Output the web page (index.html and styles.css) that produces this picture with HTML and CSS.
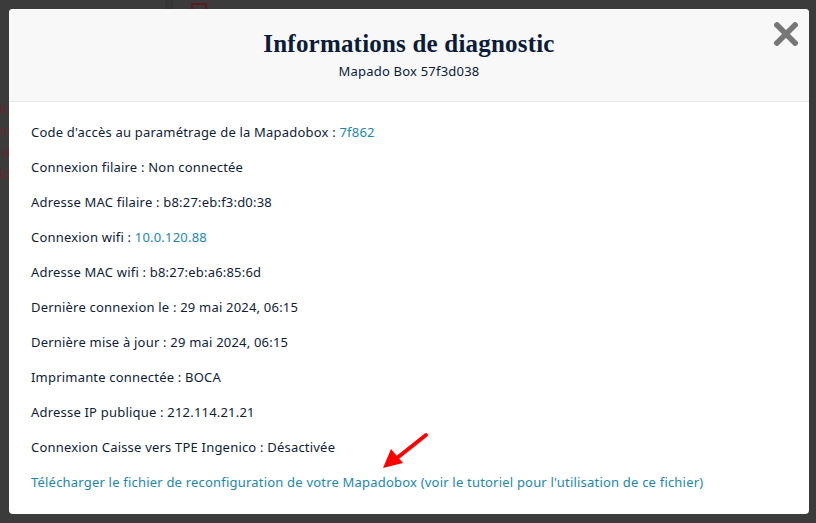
FILE: index.html
```html
<!DOCTYPE html>
<html lang="fr">

<head>
  <meta charset="UTF-8">
  <meta name="viewport" content="width=device-width, initial-scale=1.0">
  <title>Informations de diagnostic</title>
  <link rel="stylesheet" href="styles.css">
</head>

<body>
  <div class="page">
    <div class="page-toolbar">
      <span class="page-divider"></span>
      <span class="page-checkbox"></span>
    </div>
    <div class="page-text">
      <p>Mapado</p>
      <p>Entrer</p>
      <p>ou a</p>
      <p>Mapado.</p>
    </div>
  </div>

  <div class="modal-overlay">
    <div class="modal">
      <div class="modal-header">
        <h1>Informations de diagnostic</h1>
        <p>Mapado Box 57f3d038</p>
        <span class="close">
          <svg width="24" height="24" viewBox="0 0 24 24">
            <path d="M3 3 L21 21 M21 3 L3 21" stroke="#777" stroke-width="5.5" stroke-linecap="square" />
          </svg>
        </span>
      </div>
      <div class="modal-body">
        <p>Code d'accès au paramétrage de la Mapadobox : <a href="#">7f862</a></p>
        <p>Connexion filaire : Non connectée</p>
        <p>Adresse MAC filaire : b8:27:eb:f3:d0:38</p>
        <p>Connexion wifi : <a href="#">10.0.120.88</a></p>
        <p>Adresse MAC wifi : b8:27:eb:a6:85:6d</p>
        <p>Dernière connexion le : 29 mai 2024, 06:15</p>
        <p>Dernière mise à jour : 29 mai 2024, 06:15</p>
        <p>Imprimante connectée : BOCA</p>
        <p>Adresse IP publique : 212.114.21.21</p>
        <p>Connexion Caisse vers TPE Ingenico : Désactivée</p>
        <p><a href="#">Télécharger le fichier de reconfiguration de votre Mapadobox (voir le tutoriel pour l'utilisation de ce fichier)</a></p>

        <svg class="arrow" width="50" height="40" viewBox="0 0 50 40">
          <path d="M45 3 L16 26" stroke="#f00" stroke-width="4" stroke-linecap="round" />
          <polygon points="2,36 10,17 22,31" fill="#f00" />
        </svg>
      </div>
    </div>
  </div>
</body>

</html>
```

FILE: styles.css
```css
* {
  box-sizing: border-box;
  margin: 0;
  padding: 0;
}

body {
  width: 100vw;
  height: 100vh;
  overflow: hidden;
  background: #3b3b3b;
  font-family: 'Noto Sans', 'Open Sans', sans-serif;
  position: relative;
}

/* page sitting under the dimmed overlay */
.page-toolbar {
  height: 9px;
  display: flex;
  align-items: flex-end;
  padding-left: 165px;
}

.page-divider {
  width: 8px;
  height: 9px;
  background: #363636;
}

.page-checkbox {
  width: 16px;
  height: 6px;
  margin-left: 18px;
  border: 2px solid #5c1d22;
  border-bottom: none;
}

.page-text {
  margin-top: 89px;
  margin-left: -46px;
  width: 56px;
  text-align: right;
  color: #5e2a2e;
  font-size: 15px;
  line-height: 21.5px;
}

.modal-overlay {
  position: absolute;
  left: 0;
  top: 0;
  width: 100%;
  height: 100%;
  padding: 9px 7px 9px 9px;
}

.modal {
  width: 800px;
  height: 505px;
  background: #fff;
  border-radius: 4px;
  overflow: hidden;
  display: flex;
  flex-direction: column;
}

.modal-header {
  position: relative;
  background: #f8f8f8;
  border-bottom: 1px solid #e8e8e8;
  padding: 21px 0 21px;
  text-align: center;
  color: #0b1c3a;
}

.modal-header h1 {
  font-family: 'Liberation Serif', 'DejaVu Serif', serif;
  font-size: 25px;
  line-height: 27px;
  font-weight: bold;
  letter-spacing: 0.2px;
}

.modal-header p {
  margin-top: 5px;
  font-size: 13px;
  line-height: 18px;
  letter-spacing: 0.2px;
}

.modal-header .close {
  position: absolute;
  right: 11px;
  top: 13px;
  width: 24px;
  height: 24px;
  cursor: pointer;
}

.modal-body {
  position: relative;
  padding: 13px 22px 14px;
  color: #0f1d35;
  font-size: 13px;
  letter-spacing: 0.2px;
}

.modal-body p {
  line-height: 35px;
  white-space: nowrap;
}

.modal-body a {
  color: #2287ab;
  text-decoration: none;
}

.modal-body .arrow {
  position: absolute;
  left: 372px;
  top: 330px;
}
```
